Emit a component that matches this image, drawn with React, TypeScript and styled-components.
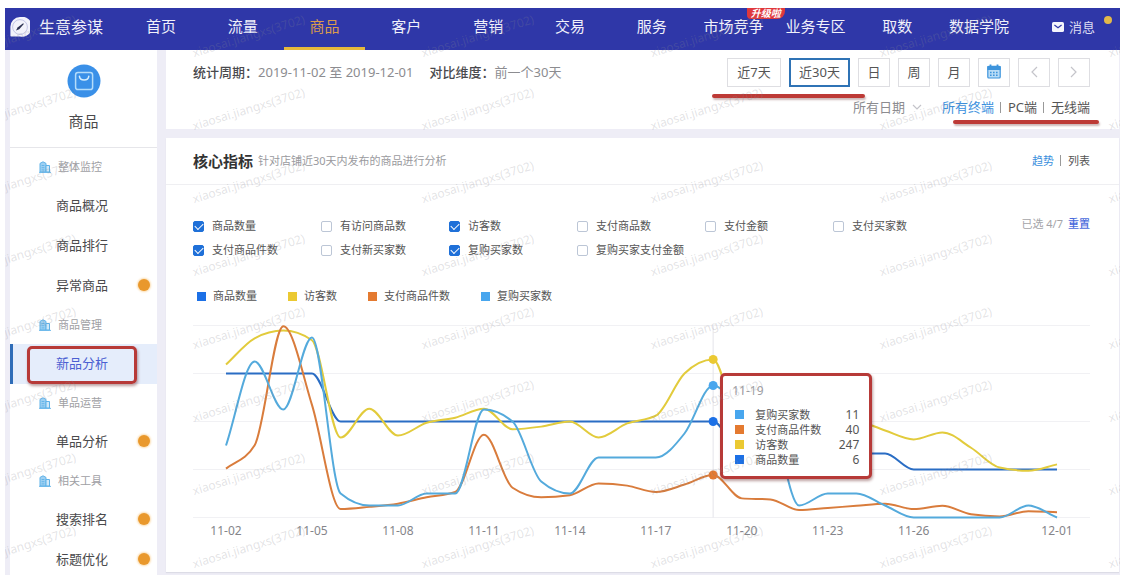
import React, { useState } from "react";
import styled, { createGlobalStyle, css } from "styled-components";

const GlobalStyle = createGlobalStyle`
  * { box-sizing: border-box; }
  body {
    margin: 0;
    background: #fff;
    color: #555;
    font-family: "Noto Sans", "Noto Sans CJK SC", sans-serif;
    font-size: 13px;
    line-height: 20px;
  }
  button, select, input { font: inherit; color: inherit; margin: 0; padding: 0; }
  button { background: none; border: 0; cursor: pointer; }
  a { color: inherit; text-decoration: none; }
  ul { list-style: none; margin: 0; padding: 0; }
`;

const Page = styled.div`
  position: relative;
  margin: 8px 7px 4px 5px;
  background: #eeedf6;
  overflow: hidden;
`;

/* ---------- top bar ---------- */

const TopBar = styled.header`
  display: flex;
  height: 42px;
  background: #2f37a8;
  color: #f0f0fa;
`;

const Brand = styled.a`
  display: flex;
  align-items: center;
  gap: 9px;
  flex: none;
  width: 115px;
  padding: 0 0 4px 5px;
  font-size: 16px;
  white-space: nowrap;
`;

const MainNav = styled.nav`
  display: flex;
  flex: 1;
`;

const NavLink = styled.a<{ $active?: boolean }>`
  position: relative;
  flex: 1 1 0;
  padding-top: 8px;
  border-bottom: 3px solid ${(p) => (p.$active ? "#e6b93c" : "transparent")};
  color: ${(p) => (p.$active ? "#d99b4c" : "inherit")};
  font-size: 15px;
  text-align: center;
  white-space: nowrap;
`;

const NewBadge = styled.span`
  position: absolute;
  top: 0;
  left: 54px;
  width: 38px;
  border-radius: 0 0 8px 4px;
  background: #e0383c;
  color: #fff;
  font-size: 10px;
  font-weight: 700;
  font-style: italic;
  line-height: 11px;
`;

const Messages = styled.button`
  position: relative;
  display: flex;
  align-items: center;
  gap: 5px;
  width: 100px;
  padding: 0 0 5px 32px;
  font-size: 13px;
  color: #dcdcf2;
`;

const UnreadDot = styled.i`
  position: absolute;
  top: 8px;
  right: 8px;
  width: 8px;
  height: 8px;
  border-radius: 50%;
  background: #e3b94a;
`;

/* ---------- sidebar ---------- */

const Body = styled.div`
  display: flex;
`;

const Sidebar = styled.aside`
  flex: none;
  width: 147px;
  margin-left: 5px;
  background: #fff;
`;

const ModuleHead = styled.div`
  display: flex;
  flex-direction: column;
  align-items: center;
  gap: 13px;
  height: 98px;
  padding-top: 14px;
  border-bottom: 1px solid #e6e6ea;
  color: #4a4a4c;
  font-size: 15px;
`;

const SideList = styled.ul`
  display: flex;
  flex-direction: column;
  gap: 10px;
  padding-top: 5px;
`;

const SideSection = styled.li`
  display: flex;
  align-items: center;
  gap: 7px;
  height: 28px;
  padding-left: 29px;
  color: #a0a0a4;
  font-size: 11px;
`;

const SideItem = styled.li<{ $active?: boolean }>`
  position: relative;
  display: flex;
  align-items: center;
  justify-content: space-between;
  height: 30px;
  padding: 0 7px 2px 46px;
  color: #4a4a4c;
  ${(p) =>
    p.$active &&
    css`
      height: 40px;
      margin: -5px 0;
      padding-left: 43px;
      border-left: 3px solid #2f6db8;
      background: #e5edfb;
      color: #4b5fd2;
    `}
`;

const AlertDot = styled.i`
  width: 12px;
  height: 12px;
  border-radius: 50%;
  background: #e9982c;
  box-shadow: 0 0 2px 1px #fbdcae;
`;

const RedFrame = styled.span`
  position: absolute;
  inset: 2px 20px 0 14px;
  border: 3px solid #b73a38;
  border-radius: 5px;
  box-shadow: 1px 2px 3px rgba(90, 20, 20, 0.4);
`;

/* ---------- content ---------- */

const Content = styled.main`
  flex: 1;
  min-width: 0;
  display: flex;
  flex-direction: column;
  gap: 9px;
  padding: 0 1px 3px 9px;
`;

const Panel = styled.section`
  background: #fff;
`;

const MetricPanel = styled(Panel)`
  flex: 1;
  box-shadow: 0 1px 1px #dcdce6;
`;

const FilterPanel = styled(Panel)`
  position: relative;
  padding: 8px 29px 12px 27px;
`;

const FilterRow = styled.div`
  display: flex;
  align-items: center;
  justify-content: space-between;
  height: 29px;
`;

const TerminalRow = styled.div`
  display: flex;
  align-items: center;
  justify-content: flex-end;
  gap: 20px;
  height: 20px;
  margin-top: 10px;
`;

const Period = styled.dl`
  display: flex;
  margin: 0;
  padding-bottom: 2px;
  color: #8c8c90;
  white-space: nowrap;
  dt { color: #4a4a4e; font-weight: 500; }
  dd { margin: 0 16px 0 0; }
`;

const ButtonRow = styled.div`
  display: flex;
  gap: 8px;
`;

const RangeButton = styled.button<{ $width: number; $active?: boolean }>`
  display: flex;
  align-items: center;
  justify-content: center;
  width: ${(p) => p.$width}px;
  height: 29px;
  padding-bottom: 2px;
  border: ${(p) => (p.$active ? "2px solid #2f73b5" : "1px solid #dedee2")};
  background: #fff;
  color: #555;
  white-space: nowrap;
`;

const DateSelect = styled.label`
  display: flex;
  align-items: center;
  gap: 7px;
  color: #8c8c90;
  select {
    width: 52px;
    appearance: none;
    border: 0;
    background: transparent;
    line-height: 20px;
  }
`;

const Switcher = styled.div<{ $size: number }>`
  display: flex;
  align-items: center;
  font-size: ${(p) => p.$size}px;
`;

const SwitchButton = styled.button<{ $active?: boolean }>`
  color: ${(p) => (p.$active ? "#3a8fdd" : "#555")};
  &:not(:first-child)::before {
    content: "";
    display: inline-block;
    width: 1px;
    height: 11px;
    margin: 0 7px 0 6px;
    background: #999;
    vertical-align: -1px;
  }
`;

const MarkerLine = styled.i<{ $top: number; $right: number; $width: number }>`
  position: absolute;
  top: ${(p) => p.$top}px;
  right: ${(p) => p.$right}px;
  width: ${(p) => p.$width}px;
  height: 4px;
  border-radius: 2px;
  background: #bd3a36;
  box-shadow: 1px 2px 2px rgba(90, 20, 20, 0.3);
`;

const PanelHead = styled.div`
  display: flex;
  align-items: center;
  justify-content: space-between;
  height: 47px;
  padding: 0 29px 0 27px;
  border-bottom: 1px solid #efeff2;
`;

const HeadText = styled.div`
  display: flex;
  align-items: center;
  gap: 5px;
  color: #9a9a9e;
  font-size: 11px;
  h2 { margin: 0; color: #333; font-size: 15px; line-height: 20px; font-weight: 700; }
`;

const PanelBody = styled.div`
  padding: 29px 29px 30px 27px;
`;

const PickerRow = styled.div`
  display: flex;
  justify-content: space-between;
`;

const Picker = styled.div`
  display: grid;
  grid-template-columns: repeat(6, minmax(0, 128px));
  grid-auto-rows: 24px;
  flex: 1;
`;

const Option = styled.label`
  display: flex;
  align-items: center;
  gap: 8px;
  font-size: 11px;
  white-space: nowrap;
`;

const Box = styled.input`
  display: grid;
  place-items: center;
  width: 11px;
  height: 11px;
  appearance: none;
  border: 1px solid #bcc6d6;
  border-radius: 2px;
  background: #fff;
  &:checked { border-color: #1f70d8; background: #1f70d8; }
  &:checked::after {
    content: "";
    width: 7px;
    height: 4px;
    margin-bottom: 2px;
    border: solid #fff;
    border-width: 0 0 1px 1px;
    transform: rotate(-45deg);
  }
`;

const PickerInfo = styled.div`
  display: flex;
  gap: 5px;
  font-size: 11px;
  color: #a4a4a8;
  height: 20px;
  button { color: #4a6bdc; font-weight: 500; }
`;

const Legend = styled.ul`
  display: flex;
  gap: 31px;
  margin: 24px 0 12px 4px;
  font-size: 11px;
`;

const LegendItem = styled.li`
  display: flex;
  align-items: center;
  gap: 7px;
`;

const Swatch = styled.i<{ $color: string }>`
  width: 9px;
  height: 9px;
  background: ${(p) => p.$color};
`;

const ChartArea = styled.div`
  position: relative;
  svg { display: block; width: 100%; height: auto; overflow: visible; }
`;

const AxisLabel = styled.text`
  font-size: 12px;
  fill: #85858a;
  text-anchor: middle;
`;

const Tooltip = styled.div`
  position: absolute;
  top: 55px;
  left: calc(58% + 7px);
  width: 152px;
  height: 106px;
  padding: 5px 10px 0 9px;
  border: 3px solid #b73a38;
  border-radius: 5px;
  background: #fff;
  box-shadow: 1px 2px 3px rgba(90, 20, 20, 0.4);
`;

const TipTitle = styled.div`
  margin-bottom: 6px;
  color: #a0a0a4;
  font-size: 12px;
`;

const TipRow = styled.div`
  display: flex;
  align-items: center;
  height: 15px;
  padding-left: 3px;
  font-size: 11px;
  span { flex: 1; margin-left: 11px; }
  b { font-size: 12px; font-weight: 400; }
`;

/* ---------- watermark ---------- */

const WatermarkLayer = styled.div`
  position: absolute;
  inset: 0;
  overflow: hidden;
  pointer-events: none;
`;

const WatermarkGrid = styled.div`
  display: grid;
  grid-template-columns: repeat(6, 229px);
  grid-auto-rows: 73px;
  margin: -21px 0 0 -39px;
`;

const Watermark = styled.span`
  align-self: end;
  justify-self: start;
  transform: rotate(-17deg);
  transform-origin: left bottom;
  color: rgba(135, 135, 145, 0.24);
  font-size: 12px;
  line-height: 14px;
  white-space: nowrap;
`;

/* ---------- icons ---------- */

const LogoIcon = () => (
  <svg width="20" height="20" viewBox="0 0 20 20" aria-hidden="true">
    <path d="M10 0a10 10 0 1 1 0 19.6H1.2a.8.8 0 0 1-.8-.8V10A9.8 9.8 0 0 1 10 0z" fill="#f3f3fb" />
    <circle cx="10" cy="10" r="7.4" fill="none" stroke="#b9bbe0" strokeWidth=".8" />
    <path d="M6 13.6l1.6-3.2 5.6-4.2.6.7-4.6 5.4z" fill="#2b3050" />
  </svg>
);

const MailIcon = () => (
  <svg width="12" height="10" viewBox="0 0 12 10" aria-hidden="true">
    <rect width="12" height="10" rx="1.6" fill="#f5f5fc" />
    <path d="M2.4 3L6 5.8 9.6 3" fill="none" stroke="#2f37a8" strokeWidth="1.2" />
  </svg>
);

const GoodsIcon = () => (
  <svg width="34" height="34" viewBox="0 0 34 34" aria-hidden="true">
    <circle cx="17" cy="17" r="16.5" fill="#3a90e8" />
    <rect x="8.6" y="8.6" width="17" height="17" rx="2.4" fill="none" stroke="#b4dcfa" strokeWidth="1.5" />
    <path d="M12.4 12.2c.6 5.2 8.8 5.2 9.4 0" fill="none" stroke="#d4edfd" strokeWidth="1.5" strokeLinecap="round" />
  </svg>
);

const BuildingIcon = () => (
  <svg width="12" height="12" viewBox="0 0 12 12" aria-hidden="true">
    <path d="M1 11V2.4L4 .8l3 1.6V11z" fill="#9fd0f2" stroke="#5fb2e8" />
    <path d="M7 4.5h3.5V11H7z" fill="#cfe8f9" stroke="#5fb2e8" />
    <path d="M2.6 4.5h2.8M2.6 6.7h2.8M2.6 8.9h2.8M0 11.4h12" stroke="#5fb2e8" strokeWidth=".9" />
  </svg>
);

const CalendarIcon = () => (
  <svg width="14" height="15" viewBox="0 0 14 15" aria-hidden="true">
    <rect x=".8" y="2.3" width="12.4" height="11.7" rx="1" fill="#b9dcf6" stroke="#3d94dc" strokeWidth="1.2" />
    <path d="M.4 2h13.2v4H.4z" fill="#3d94dc" />
    <path d="M3.5.4v3M10.5.4v3" stroke="#3d94dc" strokeWidth="1.8" />
    <path d="M3 8.5h8M3 11.2h8" stroke="#3d94dc" strokeWidth="1.4" strokeDasharray="1.6 1.4" />
  </svg>
);

const Chevron = ({ d, w, h }: { d: string; w: number; h: number }) => (
  <svg width={w} height={h} viewBox={`0 0 ${w} ${h}`} aria-hidden="true">
    <path d={d} fill="none" stroke="#c4c4ca" strokeWidth="1.2" />
  </svg>
);

/* ---------- data ---------- */

const NAV = ["首页", "流量", "商品", "客户", "营销", "交易", "服务", "市场竞争", "业务专区", "取数", "数据学院"];

const SIDE: { text: string; section?: boolean; alert?: boolean }[] = [
  { text: "整体监控", section: true },
  { text: "商品概况" },
  { text: "商品排行" },
  { text: "异常商品", alert: true },
  { text: "商品管理", section: true },
  { text: "新品分析" },
  { text: "单品运营", section: true },
  { text: "单品分析", alert: true },
  { text: "相关工具", section: true },
  { text: "搜索排名", alert: true },
  { text: "标题优化", alert: true },
];

const METRICS = [
  "商品数量", "有访问商品数", "访客数", "支付商品数", "支付金额", "支付买家数",
  "支付商品件数", "支付新买家数", "复购买家数", "复购买家支付金额",
];

type Series = { name: string; color: string; line: string; unit: number; values: number[] };

const SERIES: Series[] = [
  {
    name: "商品数量", color: "#1c70e6", line: "#2a6dc4", unit: 16,
    values: [9, 9, 9, 9, 6, 6, 6, 6, 6, 6, 6, 6, 6, 6, 6, 6, 6, 6, 4, 4, 4, 4, 4, 4, 3, 3, 3, 3, 3, 3],
  },
  {
    name: "访客数", color: "#ebc932", line: "#e2cb3c", unit: 0.64,
    values: [239, 280, 292, 277, 125, 170, 128, 148, 156, 170, 138, 142, 150, 125, 147, 159, 225, 247, 136, 144, 155, 158, 152, 136, 122, 133, 109, 78, 73, 83],
  },
  {
    name: "支付商品件数", color: "#e47a30", line: "#d97c3c", unit: 1.0625,
    values: [46, 68, 180, 106, 8, 10, 13, 19, 24, 78, 28, 19, 21, 32, 30, 24, 31, 40, 18, 17, 7, 9, 11, 13, 8, 11, 3, 1, 6, 5],
  },
  {
    name: "复购买家数", color: "#48a6ee", line: "#54aadc", unit: 12,
    values: [6, 13, 9, 15, 2, 1, 1, 2, 2, 9, 8, 3, 2, 5, 5, 5, 7, 11, 9, 8, 1, 2, 2, 1, 0, 0, 0, 0, 1, 0],
  },
];

const AXIS: [number, string][] = [
  [0, "11-02"], [3, "11-05"], [6, "11-08"], [9, "11-11"], [12, "11-14"],
  [15, "11-17"], [18, "11-20"], [21, "11-23"], [24, "11-26"], [29, "12-01"],
];

const WIDTH = 897;
const BASE = 199.5;
const HOVER = 17;
const px = (i: number) => 33 + (i * 831) / 29;
const py = (s: Series, i: number) => BASE - s.values[i] * s.unit;

// Monotone cubic interpolation, so peaks stay on their data points.
function smoothPath(s: Series): string {
  const n = s.values.length;
  const h = 831 / 29;
  const slope = (i: number) => (py(s, i + 1) - py(s, i)) / h;
  const tangent = (i: number) => {
    if (i === 0) return slope(0);
    if (i === n - 1) return slope(n - 2);
    const a = slope(i - 1);
    const b = slope(i);
    if (a * b <= 0) return 0;
    return Math.sign(a) * Math.min(Math.abs(a) * 2, Math.abs(b) * 2, Math.abs(a + b) / 2);
  };
  let d = `M${px(0)} ${py(s, 0)}`;
  for (let i = 0; i < n - 1; i++) {
    d += `C${px(i) + h / 3} ${py(s, i) + (tangent(i) * h) / 3} ${px(i + 1) - h / 3} ${py(s, i + 1) - (tangent(i + 1) * h) / 3} ${px(i + 1)} ${py(s, i + 1)}`;
  }
  return d;
}

const TrendChart = () => (
  <ChartArea>
    <svg viewBox={`0 0 ${WIDTH} 224`} role="img" aria-label="核心指标趋势">
      {[0, 1, 2, 3, 4].map((i) => (
        <path key={i} d={`M0 ${BASE - i * 48}H${WIDTH}`} stroke="#f1f1f4" />
      ))}
      <path d={`M${px(HOVER)} 7.5V${BASE}`} stroke="#e4e4ea" />
      {SERIES.map((s) => (
        <path key={s.name} d={smoothPath(s)} fill="none" stroke={s.line} strokeWidth="2" />
      ))}
      {SERIES.map((s) => (
        <circle key={s.name} cx={px(HOVER)} cy={py(s, HOVER)} r="4.5" fill={s.color} />
      ))}
      {AXIS.map(([i, label]) => (
        <AxisLabel key={label} x={px(i)} y="217">{label}</AxisLabel>
      ))}
    </svg>
    <Tooltip role="tooltip">
      <TipTitle>11-19</TipTitle>
      {[...SERIES].reverse().map((s) => (
        <TipRow key={s.name}>
          <Swatch $color={s.color} />
          <span>{s.name}</span>
          <b>{s.values[HOVER]}</b>
        </TipRow>
      ))}
    </Tooltip>
  </ChartArea>
);

export default function App() {
  const [checked, setChecked] = useState<string[]>(SERIES.map((s) => s.name));
  const toggle = (m: string) =>
    setChecked((c) => (c.includes(m) ? c.filter((x) => x !== m) : [...c, m]));

  return (
    <>
      <GlobalStyle />
      <Page>
        <TopBar>
          <Brand href="#"><LogoIcon />生意参谋</Brand>
          <MainNav>
            {NAV.map((n) => (
              <NavLink key={n} href="#" $active={n === "商品"}>
                {n}
                {n === "市场竞争" && <NewBadge>升级啦</NewBadge>}
              </NavLink>
            ))}
          </MainNav>
          <Messages><MailIcon />消息<UnreadDot /></Messages>
        </TopBar>

        <Body>
          <Sidebar>
            <ModuleHead><GoodsIcon />商品</ModuleHead>
            <SideList>
              {SIDE.map((s) =>
                s.section ? (
                  <SideSection key={s.text}><BuildingIcon />{s.text}</SideSection>
                ) : (
                  <SideItem key={s.text} $active={s.text === "新品分析"}>
                    <a href="#">{s.text}</a>
                    {s.alert && <AlertDot />}
                    {s.text === "新品分析" && <RedFrame />}
                  </SideItem>
                )
              )}
            </SideList>
          </Sidebar>

          <Content>
            <FilterPanel>
              <FilterRow>
                <Period>
                  <dt>统计周期：</dt>
                  <dd>2019-11-02 至 2019-12-01</dd>
                  <dt>对比维度：</dt>
                  <dd>前一个30天</dd>
                </Period>
                <ButtonRow>
                  <RangeButton $width={54}>近7天</RangeButton>
                  <RangeButton $width={61} $active>近30天</RangeButton>
                  <RangeButton $width={32}>日</RangeButton>
                  <RangeButton $width={32}>周</RangeButton>
                  <RangeButton $width={32}>月</RangeButton>
                  <RangeButton $width={32} aria-label="选择日期"><CalendarIcon /></RangeButton>
                  <RangeButton $width={32} aria-label="上一页"><Chevron w={8} h={12} d="M7 1L2 6l5 5" /></RangeButton>
                  <RangeButton $width={32} aria-label="下一页"><Chevron w={8} h={12} d="M1 1l5 5-5 5" /></RangeButton>
                </ButtonRow>
              </FilterRow>
              <TerminalRow>
                <DateSelect>
                  <select aria-label="日期范围"><option>所有日期</option></select>
                  <Chevron w={10} h={6} d="M1 1l4 4 4-4" />
                </DateSelect>
                <Switcher $size={13}>
                  <SwitchButton $active>所有终端</SwitchButton>
                  <SwitchButton>PC端</SwitchButton>
                  <SwitchButton>无线端</SwitchButton>
                </Switcher>
              </TerminalRow>
              <MarkerLine $top={44} $right={254} $width={153} />
              <MarkerLine $top={70} $right={20} $width={146} />
            </FilterPanel>

            <MetricPanel>
              <PanelHead>
                <HeadText>
                  <h2>核心指标</h2>
                  针对店铺近30天内发布的商品进行分析
                </HeadText>
                <Switcher $size={11}>
                  <SwitchButton $active>趋势</SwitchButton>
                  <SwitchButton>列表</SwitchButton>
                </Switcher>
              </PanelHead>
              <PanelBody>
                <PickerRow>
                  <Picker>
                    {METRICS.map((m) => (
                      <Option key={m}>
                        <Box type="checkbox" checked={checked.includes(m)} onChange={() => toggle(m)} />
                        {m}
                      </Option>
                    ))}
                  </Picker>
                  <PickerInfo>
                    <span>已选 {checked.length}/7</span>
                    <button onClick={() => setChecked([])}>重置</button>
                  </PickerInfo>
                </PickerRow>
                <Legend>
                  {SERIES.map((s) => (
                    <LegendItem key={s.name}><Swatch $color={s.color} />{s.name}</LegendItem>
                  ))}
                </Legend>
                <TrendChart />
              </PanelBody>
            </MetricPanel>
          </Content>
        </Body>

        <WatermarkLayer aria-hidden="true">
          <WatermarkGrid>
            {Array.from({ length: 48 }, (_, i) => (
              <Watermark key={i}>xiaosai.jiangxs(3702)</Watermark>
            ))}
          </WatermarkGrid>
        </WatermarkLayer>
      </Page>
    </>
  );
}
